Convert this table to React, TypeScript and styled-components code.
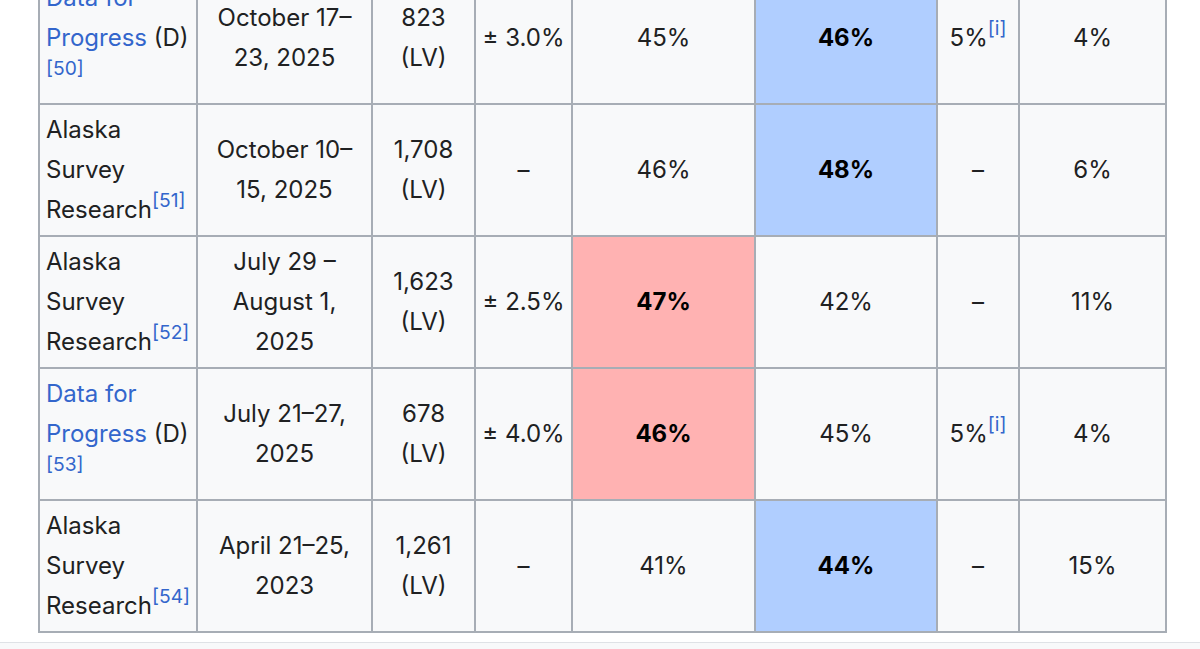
import React from 'react'
import styled, { createGlobalStyle } from 'styled-components'

const GlobalStyle = createGlobalStyle`
  html, body {
    margin: 0;
    padding: 0;
    background: #ffffff;
    overflow: hidden;
  }
  body {
    font-family: Inter, "Liberation Sans", Arial, sans-serif;
    color: #202122;
  }
`

type Tone = 'red' | 'blue' | undefined

type Cell = {
  text: React.ReactNode
  tone?: Tone
  bold?: boolean
}

type Row = {
  pollster: React.ReactNode
  dates: React.ReactNode
  sample: React.ReactNode
  margin: string
  rep: Cell
  dem: Cell
  other: React.ReactNode
  undecided: string
}

const COLUMN_WIDTHS = [158, 175, 103, 97, 183, 182, 82, 147]

const Page = styled.div`
  display: flex;
  flex-direction: column;
  height: 649px;
`

const TableWrap = styled.div`
  padding-left: 38px;
  margin-top: -29px;
`

const PollTable = styled.table`
  border-collapse: collapse;
  table-layout: fixed;
  width: 1127px;
  background: #f8f9fa;
  font-size: 24px;
  line-height: 40px;
`

const Td = styled.td<{ $align?: 'left' | 'center'; $tone?: Tone; $bold?: boolean }>`
  border: 2px solid #a7adb5;
  height: 120px;
  padding: 5px 6px;
  vertical-align: middle;
  text-align: ${(p) => p.$align ?? 'center'};
  font-weight: ${(p) => (p.$bold ? 700 : 400)};
  color: ${(p) => (p.$bold ? '#000000' : '#202122')};
  background: ${(p) =>
    p.$tone === 'red' ? '#ffb2b2' : p.$tone === 'blue' ? '#b0ceff' : '#f8f9fa'};
`

const WikiLink = styled.span`
  color: #3366cc;
`

const Ref = styled.sup`
  color: #3366cc;
  font-size: 0.8em;
  font-weight: 400;
  line-height: 1;
  vertical-align: super;
  position: relative;
  top: -0.1em;
`

const Spacer = styled.div`
  height: 9px;
  flex-shrink: 0;
`

const BottomBar = styled.div`
  flex: 1;
  border-top: 1px solid #dfe2e6;
  background: #f8f9fa;
`

const rows: Row[] = [
  {
    pollster: (
      <>
        <WikiLink>Data for</WikiLink>
        <br />
        <WikiLink>Progress</WikiLink> (D)
        <br />
        <Ref>[50]</Ref>
      </>
    ),
    dates: (
      <>
        October 17–
        <br />
        23, 2025
      </>
    ),
    sample: (
      <>
        823
        <br />
        (LV)
      </>
    ),
    margin: '± 3.0%',
    rep: { text: '45%' },
    dem: { text: '46%', tone: 'blue', bold: true },
    other: (
      <>
        5%<Ref>[i]</Ref>
      </>
    ),
    undecided: '4%',
  },
  {
    pollster: (
      <>
        Alaska
        <br />
        Survey
        <br />
        Research<Ref>[51]</Ref>
      </>
    ),
    dates: (
      <>
        October 10–
        <br />
        15, 2025
      </>
    ),
    sample: (
      <>
        1,708
        <br />
        (LV)
      </>
    ),
    margin: '–',
    rep: { text: '46%' },
    dem: { text: '48%', tone: 'blue', bold: true },
    other: '–',
    undecided: '6%',
  },
  {
    pollster: (
      <>
        Alaska
        <br />
        Survey
        <br />
        Research<Ref>[52]</Ref>
      </>
    ),
    dates: (
      <>
        July 29 –
        <br />
        August 1,
        <br />
        2025
      </>
    ),
    sample: (
      <>
        1,623
        <br />
        (LV)
      </>
    ),
    margin: '± 2.5%',
    rep: { text: '47%', tone: 'red', bold: true },
    dem: { text: '42%' },
    other: '–',
    undecided: '11%',
  },
  {
    pollster: (
      <>
        <WikiLink>Data for</WikiLink>
        <br />
        <WikiLink>Progress</WikiLink> (D)
        <br />
        <Ref>[53]</Ref>
      </>
    ),
    dates: (
      <>
        July 21–27,
        <br />
        2025
      </>
    ),
    sample: (
      <>
        678
        <br />
        (LV)
      </>
    ),
    margin: '± 4.0%',
    rep: { text: '46%', tone: 'red', bold: true },
    dem: { text: '45%' },
    other: (
      <>
        5%<Ref>[i]</Ref>
      </>
    ),
    undecided: '4%',
  },
  {
    pollster: (
      <>
        Alaska
        <br />
        Survey
        <br />
        Research<Ref>[54]</Ref>
      </>
    ),
    dates: (
      <>
        April 21–25,
        <br />
        2023
      </>
    ),
    sample: (
      <>
        1,261
        <br />
        (LV)
      </>
    ),
    margin: '–',
    rep: { text: '41%' },
    dem: { text: '44%', tone: 'blue', bold: true },
    other: '–',
    undecided: '15%',
  },
]

export default function App() {
  return (
    <>
      <GlobalStyle />
      <Page>
        <TableWrap>
          <PollTable>
            <colgroup>
              {COLUMN_WIDTHS.map((w, i) => (
                <col key={i} style={{ width: w }} />
              ))}
            </colgroup>
            <tbody>
              {rows.map((row, i) => (
                <tr key={i}>
                  <Td $align="left">{row.pollster}</Td>
                  <Td>{row.dates}</Td>
                  <Td>{row.sample}</Td>
                  <Td>{row.margin}</Td>
                  <Td $tone={row.rep.tone} $bold={row.rep.bold}>
                    {row.rep.text}
                  </Td>
                  <Td $tone={row.dem.tone} $bold={row.dem.bold}>
                    {row.dem.text}
                  </Td>
                  <Td>{row.other}</Td>
                  <Td>{row.undecided}</Td>
                </tr>
              ))}
            </tbody>
          </PollTable>
        </TableWrap>
        <Spacer />
        <BottomBar />
      </Page>
    </>
  )
}
